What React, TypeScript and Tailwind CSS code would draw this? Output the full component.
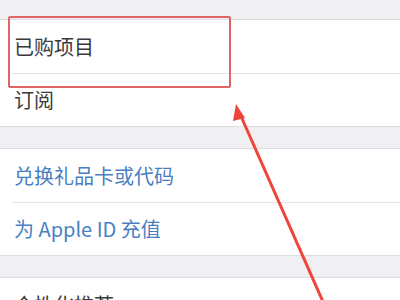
import React from 'react';

const sections = [
  { rows: [{ label: '已购项目' }, { label: '订阅' }], blue: false },
  { rows: [{ label: '兑换礼品卡或代码' }, { label: '为 Apple ID 充值' }], blue: true },
  { rows: [{ label: '个性化推荐' }], blue: false },
];

const App = () => {
  return (
    <div
      className="relative w-[400px] h-[300px] overflow-hidden bg-[#efeff4]"
      style={{ fontFamily: '"Noto Sans CJK SC", "Noto Sans", sans-serif' }}
    >
      <div className="flex flex-col gap-[21px] pt-[19px]">
        {sections.map((section, si) => (
          <div key={si} className="bg-white border-y border-[#dddde0]">
            {section.rows.map((row, ri) => (
              <div key={row.label} className="pl-[12px]">
                <div
                  className={`flex items-center h-[53px] pl-[2px] text-[20px] ${
                    ri > 0 ? 'border-t border-[#e3e3e6]' : ''
                  } ${section.blue ? 'text-[#4a7fc3]' : 'text-[#3a3a3a]'}`}
                >
                  {row.label}
                </div>
              </div>
            ))}
          </div>
        ))}
      </div>

      {/* highlight box */}
      <div className="absolute left-[8px] top-[16px] w-[223px] h-[72px] border-2 border-[#e06464] rounded-[2px]" />

      {/* arrow */}
      <svg className="absolute left-0 top-0" width="400" height="300" viewBox="0 0 400 300">
        <line x1="324" y1="304" x2="240" y2="114" stroke="#f0443a" strokeWidth="3" />
        <polygon points="236,104 245,118 233,121" fill="#f0443a" />
      </svg>
    </div>
  );
};

export default App;
